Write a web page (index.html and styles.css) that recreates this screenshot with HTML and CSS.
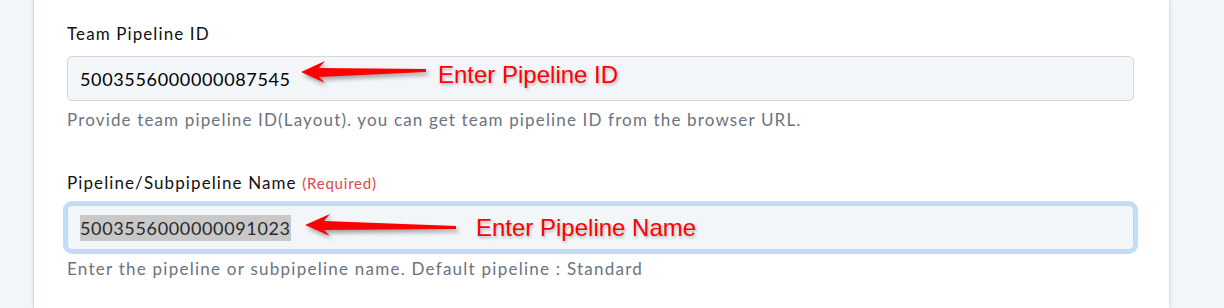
FILE: index.html
```html
<!DOCTYPE html>
<html>
<head>
<meta charset="utf-8">
<link rel="stylesheet" href="styles.css">
</head>
<body>
<div class="page">
  <div class="card">
    <div class="field first">
      <label class="label">Team Pipeline ID</label>
      <div class="input">5003556000000087545</div>
      <p class="help">Provide team pipeline ID(Layout). you can get team pipeline ID from the browser URL.</p>
      <div class="note note1">
        <svg class="arrow" width="130" height="30" viewBox="0 0 130 30">
          <polygon points="2,12 26,1 20,8 127,9 127,12 20,17 26,23" fill="#ff0000"/>
        </svg>
        <span class="note-text">Enter Pipeline ID</span>
      </div>
    </div>
    <div class="field second">
      <label class="label">Pipeline/Subpipeline Name <span class="req">(Required)</span></label>
      <div class="input focus"><span class="sel">5003556000000091023</span></div>
      <p class="help help2">Enter the pipeline or subpipeline name. Default pipeline : Standard</p>
      <div class="note note2">
        <svg class="arrow" width="155" height="30" viewBox="0 0 155 30">
          <polygon points="2,12 27,1 21,8 153,13 153,16 21,17 27,23" fill="#ff0000"/>
        </svg>
        <span class="note-text">Enter Pipeline Name</span>
      </div>
    </div>
  </div>
  <div class="rest"></div>
</div>
</body>
</html>
```
FILE: styles.css
```css
html, body {
  margin: 0;
  padding: 0;
  background: #f2f5f9;
}
body {
  font-family: "Lato", "Noto Sans", sans-serif;
  width: 1224px;
  height: 308px;
  overflow: hidden;
}
.page {
  display: flex;
  height: 308px;
  padding-left: 34px;
}
.card {
  width: 1135px;
  background: #ffffff;
  box-shadow: -1px 0 2px rgba(150, 170, 220, 0.45), 1px 0 3px rgba(150, 170, 220, 0.35);
  padding: 22px 35px 0 33px;
  box-sizing: border-box;
}
.field {
  position: relative;
}
.second {
  margin-top: 39px;
}
.label {
  display: block;
  font-size: 17px;
  letter-spacing: 1.1px;
  color: #111;
  line-height: 24px;
  margin-bottom: 10px;
}
.req {
  font-size: 15px;
  letter-spacing: 0.8px;
  color: #e0474c;
}
.input {
  height: 43px;
  border: 1px solid #d3d7de;
  border-radius: 5px;
  background: #f3f6f9;
  box-sizing: content-box;
  padding: 0 12px;
  display: flex;
  align-items: center;
  font-size: 18px;
  letter-spacing: 0.65px;
  color: #000;
}
.input.focus {
  box-shadow: 0 0 0 4px #c2ddfa;
  border-color: #cfd3d8;
  color: #2a2a2a;
}
.sel {
  background: #c8c8c8;
  padding: 2px 0;
}
.help {
  margin: 7px 0 0;
  font-size: 17px;
  letter-spacing: 1.15px;
  line-height: 24px;
  color: #6b7380;
}
.help2 {
  letter-spacing: 1.25px;
}
.note {
  position: absolute;
  display: flex;
  align-items: center;
}
.note1 {
  left: 232px;
  top: 38px;
}
.note2 {
  left: 236px;
  top: 42px;
}
.arrow {
  filter: drop-shadow(2px 3px 2px rgba(0, 0, 0, 0.35));
}
.note-text {
  font-family: "Liberation Sans", Arial, sans-serif;
  font-size: 24px;
  letter-spacing: 0;
  color: #ff0000;
  text-shadow: 1px 2px 3px rgba(0, 0, 0, 0.25);
  margin-left: 9px;
}
.note2 .note-text {
  margin-left: 18px;
}
.rest {
  flex: 1;
}
```
